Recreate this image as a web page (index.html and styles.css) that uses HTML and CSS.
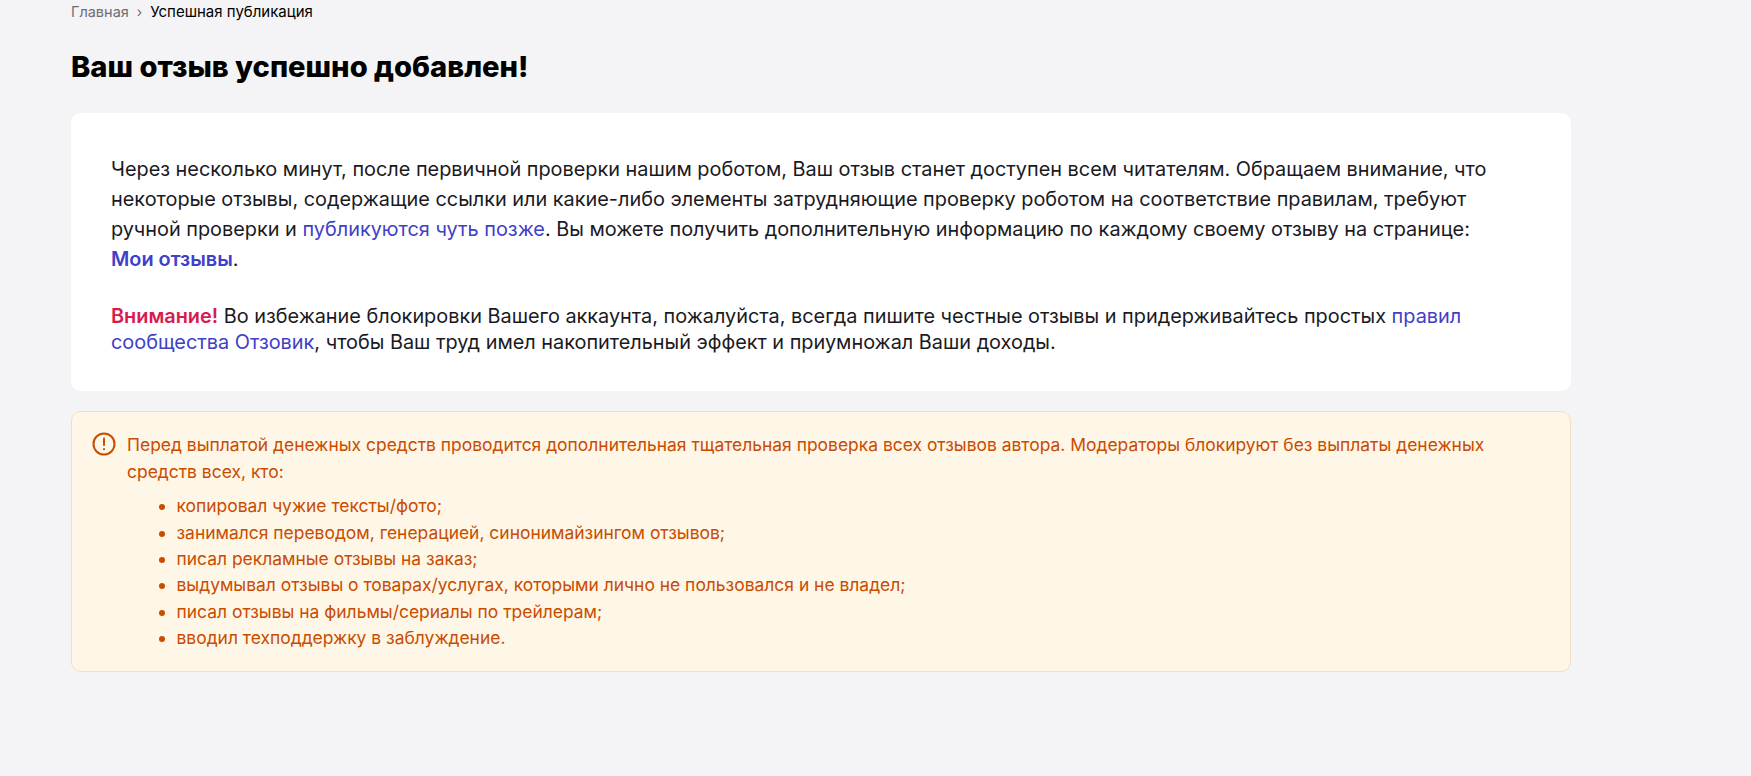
FILE: index.html
```html
<!DOCTYPE html>
<html lang="ru">
<head>
<meta charset="utf-8">
<title>Успешная публикация</title>
<link rel="stylesheet" href="styles.css">
</head>
<body>
<main class="page">
  <nav class="crumbs"><a href="#" class="crumb-link">Главная</a><span class="crumb-sep">›</span><span class="crumb-current">Успешная публикация</span></nav>
  <h1 class="title">Ваш отзыв успешно добавлен!</h1>
  <section class="card">
    <p class="para">Через несколько минут, после первичной проверки нашим роботом, Ваш отзыв станет доступен всем читателям. Обращаем внимание, что некоторые отзывы, содержащие ссылки или какие-либо элементы затрудняющие проверку роботом на соответствие правилам, требуют ручной проверки и <a href="#" class="link">публикуются чуть позже</a>. Вы можете получить дополнительную информацию по каждому своему отзыву на странице: <a href="#" class="link strong">Мои отзывы</a>.</p>
    <p class="para para-tight"><b class="warn">Внимание!</b> Во избежание блокировки Вашего аккаунта, пожалуйста, всегда пишите честные отзывы и придерживайтесь простых <a href="#" class="link">правил сообщества Отзовик</a>, чтобы Ваш труд имел накопительный эффект и приумножал Ваши доходы.</p>
  </section>
  <section class="alert">
    <svg class="alert-icon" viewBox="0 0 24 24" width="24" height="24" fill="none" stroke="#c94c00" stroke-width="2" stroke-linecap="round"><circle cx="12" cy="12" r="10.5"/><path d="M12 6.5v6.5"/><path d="M12 17v.2"/></svg>
    <div class="alert-body">
      <p class="alert-text">Перед выплатой денежных средств проводится дополнительная тщательная проверка всех отзывов автора. Модераторы блокируют без выплаты денежных средств всех, кто:</p>
      <ul class="alert-list">
        <li>копировал чужие тексты/фото;</li>
        <li>занимался переводом, генерацией, синонимайзингом отзывов;</li>
        <li>писал рекламные отзывы на заказ;</li>
        <li>выдумывал отзывы о товарах/услугах, которыми лично не пользовался и не владел;</li>
        <li>писал отзывы на фильмы/сериалы по трейлерам;</li>
        <li>вводил техподдержку в заблуждение.</li>
      </ul>
    </div>
  </section>
</main>
</body>
</html>
```
FILE: styles.css
```css
html, body { margin: 0; padding: 0; }
body { background: #f4f4f7; font-family: Inter, "Noto Sans", sans-serif; color: #1a1a1f; height: 776px; overflow: hidden; }
.page { width: 1500px; margin-left: 71px; }
.crumbs { display: flex; align-items: center; height: 24px; font-size: 15px; line-height: 24px; }
.crumb-link { color: #6e6e73; text-decoration: none; font-size: 14.5px; }
.crumb-sep { color: #6e6e73; margin: 0 8px; font-size: 14px; }
.crumb-current { color: #000; }
.title { margin: 24px 0 0; font-size: 29.15px; line-height: 38px; font-weight: 800; color: #000; }
.card { margin-top: 27px; background: #fff; border-radius: 10px; padding: 41px 40px 0; height: 278px; box-sizing: border-box; }
.para { margin: 0; font-size: 19.88px; line-height: 30px; }
.para-tight { margin-top: 29px; line-height: 26px; }
.link { color: #4040c8; text-decoration: none; }
.strong { font-weight: 600; white-space: nowrap; }
.warn { color: #d81b4e; font-weight: 600; }
.alert { margin-top: 20px; display: flex; gap: 11px; box-sizing: border-box; height: 261px; background: #fef6e7; border: 1px solid #f0dfc0; border-radius: 10px; padding: 20px 20px; color: #c94c00; }
.alert-icon { flex: none; }
.alert-text { margin: 0; font-size: 17.45px; line-height: 26.6px; }
.alert-list { margin: 8px 0 0; padding-left: 49.5px; font-size: 17.45px; line-height: 26.4px; }
```
